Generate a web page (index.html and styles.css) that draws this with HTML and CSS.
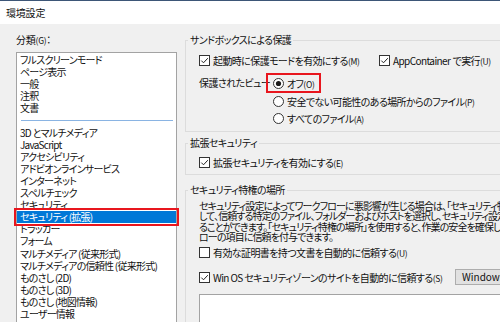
FILE: index.html
```html
<!DOCTYPE html>
<html lang="ja">
<head>
<meta charset="utf-8">
<title>環境設定</title>
<link rel="stylesheet" href="styles.css">
</head>
<body>
<div class="window">
  <div class="titlebar">環境設定</div>
  <div class="content">
    <div class="sidebar">
      <div class="cat-label">分類<span class="mn">(G)</span>：</div>
      <ul class="list">
        <li>フルスクリーンモード</li>
        <li>ページ表示</li>
        <li>一般</li>
        <li>注釈</li>
        <li>文書</li>
        <li class="sep"></li>
        <li>3D とマルチメディア</li>
        <li>JavaScript</li>
        <li>アクセシビリティ</li>
        <li>アドビオンラインサービス</li>
        <li>インターネット</li>
        <li>スペルチェック</li>
        <li>セキュリティ</li>
        <li class="selected">セキュリティ (拡張)</li>
        <li>トラッカー</li>
        <li>フォーム</li>
        <li>マルチメディア (従来形式)</li>
        <li>マルチメディアの信頼性 (従来形式)</li>
        <li>ものさし (2D)</li>
        <li>ものさし (3D)</li>
        <li>ものさし (地図情報)</li>
        <li>ユーザー情報</li>
      </ul>
    </div>
    <div class="panel">
      <section class="group g1">
        <div class="group-title">サンドボックスによる保護</div>
        <div class="row r1">
          <div class="check w180">
            <svg class="cb" width="11" height="11" viewBox="0 0 11 11"><rect x="0.5" y="0.5" width="10" height="10" fill="#fff" stroke="#333"/><path d="M2.3 5.6 L4.5 7.8 L8.8 3.2" fill="none" stroke="#222" stroke-width="1"/></svg>
            <span>起動時に保護モードを有効にする<span class="mn">(M)</span></span>
          </div>
          <div class="check">
            <svg class="cb" width="11" height="11" viewBox="0 0 11 11"><rect x="0.5" y="0.5" width="10" height="10" fill="#fff" stroke="#333"/><path d="M2.3 5.6 L4.5 7.8 L8.8 3.2" fill="none" stroke="#222" stroke-width="1"/></svg>
            <span>AppContainer<span class="sp"> </span>で実行<span class="mn">(U)</span></span>
          </div>
        </div>
        <div class="pv">
          <div class="pv-label">保護されたビュー</div>
          <div class="pv-opts">
            <div class="hl">
              <svg class="rb" width="11" height="11" viewBox="0 0 11 11"><circle cx="5.5" cy="5.5" r="5" fill="#fff" stroke="#333"/><circle cx="5.5" cy="5.5" r="2.6" fill="#1a1a1a"/></svg>
              <span>オフ<span class="mn">(O)</span></span>
            </div>
            <div class="opt o2">
              <svg class="rb" width="11" height="11" viewBox="0 0 11 11"><circle cx="5.5" cy="5.5" r="5" fill="#fff" stroke="#333"/></svg>
              <span>安全でない可能性のある場所からのファイル<span class="mn">(P)</span></span>
            </div>
            <div class="opt o3">
              <svg class="rb" width="11" height="11" viewBox="0 0 11 11"><circle cx="5.5" cy="5.5" r="5" fill="#fff" stroke="#333"/></svg>
              <span>すべてのファイル<span class="mn">(A)</span></span>
            </div>
          </div>
        </div>
      </section>

      <section class="group g2">
        <div class="group-title">拡張セキュリティ</div>
        <div class="row r-es">
          <div class="check">
            <svg class="cb" width="11" height="11" viewBox="0 0 11 11"><rect x="0.5" y="0.5" width="10" height="10" fill="#fff" stroke="#333"/><path d="M2.3 5.6 L4.5 7.8 L8.8 3.2" fill="none" stroke="#222" stroke-width="1"/></svg>
            <span>拡張セキュリティを有効にする<span class="mn">(E)</span></span>
          </div>
        </div>
      </section>

      <section class="group g3">
        <div class="group-title">セキュリティ特権の場所</div>
        <p class="desc">セキュリティ設定によってワークフローに悪影響が生じる場合は、「セキュリティ特権の場所」を使用<br>して、信頼する特定のファイル、フォルダーおよびホストを選択し、セキュリティ設定の制限を回避す<br>ることができます。「セキュリティ特権の場所」を使用すると、作業の安全を確保しながら、ワークフ<br>ローの項目に信頼を付与できます。</p>
        <div class="row c1">
          <div class="check">
            <svg class="cb" width="11" height="11" viewBox="0 0 11 11"><rect x="0.5" y="0.5" width="10" height="10" fill="#fff" stroke="#333"/></svg>
            <span>有効な証明書を持つ文書を自動的に信頼する<span class="mn">(U)</span></span>
          </div>
        </div>
        <div class="row c2">
          <div class="check w256">
            <svg class="cb" width="11" height="11" viewBox="0 0 11 11"><rect x="0.5" y="0.5" width="10" height="10" fill="#fff" stroke="#333"/><path d="M2.3 5.6 L4.5 7.8 L8.8 3.2" fill="none" stroke="#222" stroke-width="1"/></svg>
            <span>Win OS セキュリティゾーンのサイトを自動的に信頼する<span class="mn">(S)</span></span>
          </div>
          <button class="btn" type="button">Windows</button>
        </div>
        <div class="box"></div>
      </section>
    </div>
  </div>
</div>
</body>
</html>
```

FILE: styles.css
```css
html, body {
  margin: 0;
  padding: 0;
}
body {
  width: 500px;
  height: 322px;
  overflow: hidden;
  background: #f0f0f0;
  font-family: "Noto Sans CJK JP", "Noto Sans", sans-serif;
  font-size: 10px;
  letter-spacing: -0.6px;
  color: #111;
  font-feature-settings: "palt";
}
.window {
  width: 640px;
}
.titlebar {
  height: 23px;
  line-height: 23px;
  border-top: 1px solid #3d5677;
  background: #fff;
  padding-left: 6px;
  font-size: 10px;
  letter-spacing: -0.2px;
}
.content {
  display: flex;
  align-items: flex-start;
  padding-top: 10px;
}
.mn {
  font-size: 8.5px;
  letter-spacing: -0.3px;
}
.sp {
  letter-spacing: 0;
}
.sidebar {
  margin-left: 16px;
  width: 161px;
  flex: none;
}
.cat-label {
  height: 12px;
  line-height: 12px;
  letter-spacing: -0.2px;
}
.list {
  margin: 6px 0 0;
  padding: 1px 0 0;
  list-style: none;
  background: #fff;
  border: 1px solid #a3a3a3;
  height: 300px;
  box-sizing: border-box;
  letter-spacing: -0.75px;
}
.list li {
  height: 12.1px;
  line-height: 12.1px;
  padding-left: 3px;
  white-space: nowrap;
}
.list li.sep {
  display: flex;
  align-items: center;
}
.list li.sep::before {
  content: "";
  flex: 1;
  height: 1px;
  background: #8ab4e3;
  margin: 0 3px 0 1px;
}
.list li.selected {
  background: #0078d7;
  color: #fff;
  outline: 2px solid #e8161e;
  outline-offset: 1px;
}
.panel {
  margin-left: 8px;
  width: 440px;
  flex: none;
}
.group {
  border: 1px solid #dcdcdc;
  border-right: none;
  padding: 0 0 0 13px;
}
.group-title {
  width: fit-content;
  margin: -7px 0 0 -11px;
  padding: 0 2px;
  height: 12px;
  line-height: 12px;
  background: #f0f0f0;
}
.row {
  display: flex;
  align-items: center;
  height: 14px;
  white-space: nowrap;
}
.check {
  display: flex;
  align-items: center;
  gap: 3px;
  white-space: nowrap;
}
.cb, .rb {
  flex: none;
  display: block;
}
.w180 { width: 180px; }
.w256 { width: 256px; }

.g1 { margin-top: 6px; padding-bottom: 6px; }
.g1 .r1 { margin-top: 7px; }
.pv {
  display: flex;
  margin-top: 6px;
}
.pv-label {
  width: 67px;
  flex: none;
  height: 20px;
  line-height: 20px;
  white-space: nowrap;
}
.pv-opts {
  display: flex;
  flex-direction: column;
}
.hl {
  display: flex;
  align-items: center;
  gap: 3px;
  width: fit-content;
  height: 16px;
  border: 2px solid #e8161e;
  padding: 0 4px 0 5px;
}
.opt {
  display: flex;
  align-items: center;
  gap: 3px;
  height: 14px;
  padding-left: 7px;
  white-space: nowrap;
}
.o2 { margin-top: 1px; }
.o3 { margin-top: 3px; }

.g2 { margin-top: 11px; padding-bottom: 5px; }
.g2 .r-es { margin-top: 6px; }

.g3 { margin-top: 15px; }
.desc {
  margin: 5px 0 0;
  line-height: 10.3px;
  white-space: nowrap;
  letter-spacing: -0.9px;
}
.c1 { margin-top: 3px; }
.c2 { margin-top: 10px; height: 16px; }
.btn {
  height: 16px;
  width: 120px;
  box-sizing: border-box;
  border: 1px solid #adadad;
  background: #e1e1e1;
  font: inherit;
  letter-spacing: 0;
  color: #111;
  text-align: left;
  padding: 0 0 0 6px;
  line-height: 14px;
}
.box {
  margin-top: 9px;
  height: 60px;
  background: #fff;
  border: 1px solid #a3a3a3;
  border-right: none;
}
```
